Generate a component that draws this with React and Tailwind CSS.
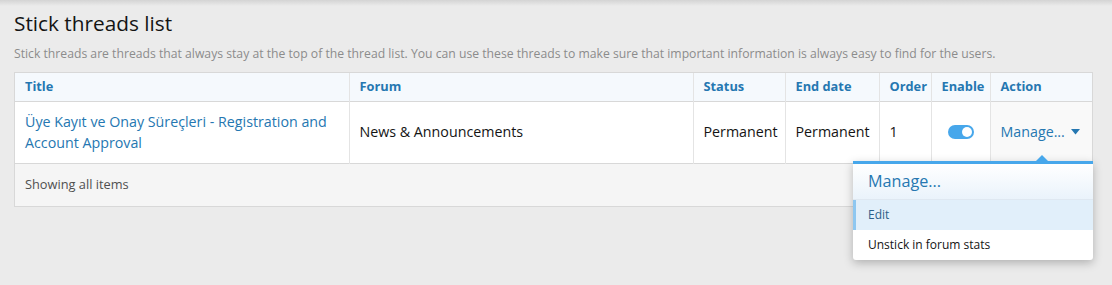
export default function App() {
  const font = { fontFamily: '"Segoe UI", "Open Sans", "Noto Sans", sans-serif' };
  return (
    <div className="min-h-[285px] w-[1112px] bg-[#ebebeb] px-[14px] pt-[8px] pb-[40px] text-[#141414] relative" style={font}>
      <div className="absolute inset-x-0 top-0 h-[6px] bg-gradient-to-b from-[#d4d4d4] to-[#ebebeb]" />
      <h1 className="relative text-[20.8px] leading-[30px] font-normal text-[#141414]">Stick threads list</h1>
      <p className="mt-[7px] text-[12.2px] leading-[18px] text-[#8c8c8c]">
        Stick threads are threads that always stay at the top of the thread list. You can use these threads to make sure that important information is always easy to find for the users.
      </p>

      <div className="relative mt-[9px] w-[1079px] border border-[#d8d8d8] bg-white">
        <table className="w-full table-fixed border-collapse text-left">
          <thead>
            <tr className="h-[28px] bg-[#f5f9fd] border-b border-[#d8d8d8] text-[12.8px] font-bold text-[#2577b1]">
              <th className="w-[334px] px-[10px] border-r border-[#e4e4e4]">Title</th>
              <th className="w-[344px] px-[10px] border-r border-[#e4e4e4]">Forum</th>
              <th className="w-[92px] px-[10px] border-r border-[#e4e4e4]">Status</th>
              <th className="w-[94px] px-[10px] border-r border-[#e4e4e4]">End date</th>
              <th className="w-[52px] px-[10px] border-r border-[#e4e4e4]">Order</th>
              <th className="w-[59px] px-[10px] border-r border-[#e4e4e4]">Enable</th>
              <th className="px-[10px]">Action</th>
            </tr>
          </thead>
          <tbody>
            <tr className="h-[62px] text-[14.25px] border-b border-[#d8d8d8]">
              <td className="px-[10px] border-r border-[#e4e4e4] text-[#2577b1] leading-[21px]">
                Üye Kayıt ve Onay Süreçleri - Registration and Account Approval
              </td>
              <td className="px-[10px] border-r border-[#e4e4e4]">News &amp; Announcements</td>
              <td className="px-[10px] border-r border-[#e4e4e4]">Permanent</td>
              <td className="px-[10px] border-r border-[#e4e4e4]">Permanent</td>
              <td className="px-[10px] border-r border-[#e4e4e4]">1</td>
              <td className="border-r border-[#e4e4e4]">
                <div className="mx-auto flex h-[14px] w-[26px] items-center justify-end rounded-full bg-[#47a7eb] px-[2px]">
                  <div className="h-[10px] w-[10px] rounded-full bg-white" />
                </div>
              </td>
              <td className="px-[10px] bg-[#f9f9f9] text-[#2577b1]">
                <span className="inline-flex items-center gap-[6px]">
                  Manage...
                  <svg width="9" height="6" viewBox="0 0 9 6"><path d="M0 0h9L4.5 5.5z" fill="#2577b1" /></svg>
                </span>
              </td>
            </tr>
          </tbody>
        </table>
        <div className="h-[42px] bg-[#f5f5f5] px-[10px] flex items-center text-[12.8px] text-[#505050]">Showing all items</div>

        <div className="absolute right-[-1px] top-[88px] w-[240px] bg-white border-t-[3px] border-[#47a7eb] rounded-b-[3px] shadow-[0_3px_10px_rgba(0,0,0,0.25)]">
          <div className="absolute right-[45px] top-[-9px] h-0 w-0 border-x-[6px] border-b-[6px] border-x-transparent border-b-[#47a7eb]" />
          <div className="h-[36px] px-[15px] flex items-center text-[16.2px] text-[#2577b1] bg-gradient-to-b from-white to-[#eaf3fb] border-b border-[#dfe8f1]">Manage...</div>
          <div className="h-[30px] px-[12px] flex items-center text-[12px] text-[#2d5f8a] bg-[#e1effa] border-l-[3px] border-[#8ec7f0]">Edit</div>
          <div className="h-[30px] px-[15px] flex items-center text-[12px] text-[#141414]">Unstick in forum stats</div>
        </div>
      </div>
    </div>
  );
}
